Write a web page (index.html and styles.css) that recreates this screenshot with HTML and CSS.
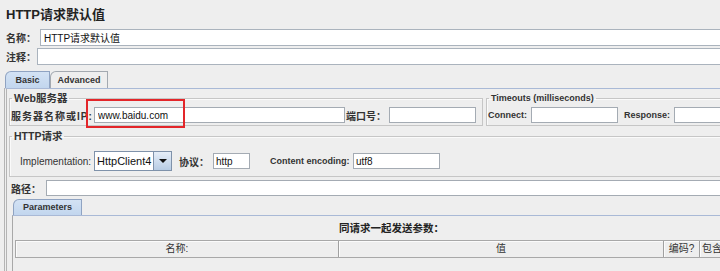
FILE: index.html
```html
<!DOCTYPE html>
<html>
  <head>
    <title>HTTP请求默认值</title>
    <link rel="stylesheet" href="styles.css">
  </head>
  <body>
    <div class="page">
      <h1 class="title">HTTP请求默认值</h1>
      <div class="row name-row">
        <label class="cn-label name-label">名称：</label>
        <input class="text top-input name-input" type="text" value="HTTP请求默认值">
      </div>
      <div class="row comment-row">
        <label class="cn-label comment-label">注释：</label>
        <input class="text top-input" type="text">
      </div>
      <div class="tabs">
        <span class="tab active basic-tab">Basic</span>
        <span class="tab advanced-tab">Advanced</span>
      </div>
      <div class="tab-panel">
        <div class="group-row">
          <fieldset class="group web-group">
            <legend class="cn-legend">Web服务器</legend>
            <div class="field-line">
              <label class="cn-label host-label">服务器名称或IP:</label>
              <input class="text host-input" type="text" value="www.baidu.com">
              <label class="cn-label port-label">端口号：</label>
              <input class="text small-input" type="text">
            </div>
          </fieldset>
          <fieldset class="group timeout-group">
            <legend class="en-legend">Timeouts (milliseconds)</legend>
            <div class="field-line">
              <label class="en-label connect-label">Connect:</label>
              <input class="text small-input" type="text">
              <label class="en-label response-label">Response:</label>
              <input class="text small-input" type="text">
            </div>
          </fieldset>
        </div>
        <fieldset class="group http-group">
          <legend class="cn-legend">HTTP请求</legend>
          <div class="impl-line">
            <label class="impl-label">Implementation:</label>
            <div class="combo">
              <span class="combo-value">HttpClient4</span>
              <span class="combo-button"><span class="arrow"></span></span>
            </div>
            <label class="cn-label protocol-label">协议：</label>
            <input class="text protocol-input" type="text" value="http">
            <label class="en-label encoding-label">Content encoding:</label>
            <input class="text small-input" type="text" value="utf8">
          </div>
        </fieldset>
        <div class="row path-row">
          <label class="cn-label path-label">路径：</label>
          <input class="text path-input" type="text">
        </div>
        <div class="sub-tabs">
          <span class="tab active params-tab">Parameters</span>
        </div>
        <div class="sub-panel">
          <div class="caption">同请求一起发送参数：</div>
          <div class="table-head">
            <span class="head-cell col-name">名称:</span>
            <span class="head-cell col-value">值</span>
            <span class="head-cell col-encode">编码?</span>
            <span class="head-cell col-include">包含</span>
          </div>
          <div class="table-body"></div>
        </div>
      </div>
      <div class="highlight"></div>
    </div>
  </body>
</html>
```

FILE: styles.css
```css
body {
  margin: 0;
  background: #eeeeee;
  overflow: hidden;
  font-family: "Liberation Sans", "Noto Sans CJK SC", sans-serif;
  color: #222;
}

.page {
  position: relative;
  width: 770px;
  height: 271px;
}

.title {
  margin: 0;
  height: 29px;
  box-sizing: border-box;
  padding: 6px 0 0 6px;
  font-size: 13px;
  line-height: 17px;
  font-weight: bold;
  color: #222;
}

.row {
  display: flex;
  align-items: center;
}

.cn-label {
  font-family: "Liberation Sans", "Noto Sans CJK SC", sans-serif;
  font-size: 10px;
  font-weight: bold;
  color: #333;
  white-space: nowrap;
}

.en-label {
  font-size: 9px;
  font-weight: bold;
  color: #333;
  white-space: nowrap;
}

.text {
  box-sizing: border-box;
  height: 16px;
  margin: 0;
  padding: 0 2px;
  border: 1px solid #a4abb3;
  background: #fff;
  font-family: "Liberation Sans", "Noto Sans CJK SC", sans-serif;
  font-size: 10px;
  color: #111;
  outline: none;
}

.name-row {
  padding-left: 6px;
  height: 17px;
}

.name-label {
  width: 34px;
}

.top-input {
  flex: 1;
  height: 17px;
  border-color: #aab3bd;
}

.name-input {
  padding-left: 3px;
}

.comment-row {
  margin-top: 2px;
  padding-left: 6px;
  height: 17px;
}

.comment-label {
  width: 31px;
}

.tabs {
  display: flex;
  align-items: flex-end;
  margin-top: 6px;
  padding-left: 5px;
  height: 17px;
}

.tab {
  box-sizing: border-box;
  height: 17px;
  border: 1px solid #a3a9b0;
  border-bottom: none;
  border-top-left-radius: 6px;
  background: #eeeeee;
  font-size: 9px;
  font-weight: bold;
  line-height: 16px;
  text-align: center;
  color: #333;
}

.tab.active {
  background: linear-gradient(#d3e2f4, #c2d6ee);
  border-color: #8fa3c2;
}

.basic-tab {
  width: 45px;
}

.advanced-tab {
  width: 58px;
}

.tab-panel {
  margin-left: 4px;
  border-top: 1px solid #a9b9d6;
  border-left: 3px double #b4b4b4;
  height: 183px;
}

.group-row {
  display: flex;
  margin-top: 2px;
  padding-left: 2px;
}

.group {
  margin: 0;
  padding: 0 2px 2px 1px;
  border: 1px solid #c6c6c6;
  box-shadow: inset 1px 1px #fafafa;
  min-width: 0;
}

.group legend {
  margin-left: 1px;
  padding: 0 2px;
  line-height: 14px;
  color: #333;
  white-space: nowrap;
}

.cn-legend {
  font-size: 10.5px;
  font-weight: bold;
}

.en-legend {
  font-size: 9px;
  font-weight: bold;
}

.web-group {
  box-sizing: border-box;
  width: 474px;
}

.timeout-group {
  flex: 1;
  margin-left: 3px;
}

.field-line {
  display: flex;
  align-items: center;
  margin-top: 2px;
  height: 16px;
}

.host-label {
  width: 83px;
  letter-spacing: 1px;
}

.host-input {
  width: 251px;
  padding-left: 3px;
}

.port-label {
  width: 44px;
  padding-left: 1px;
  box-sizing: border-box;
}

.small-input {
  width: 87px;
}

.connect-label {
  width: 43px;
}

.response-label {
  width: 50px;
  margin-left: 6px;
}

.http-group {
  margin: 3px 0 0 2px;
  padding-bottom: 5px;
}

.impl-line {
  display: flex;
  align-items: center;
  margin-top: 8px;
  padding-left: 9px;
  height: 20px;
}

.impl-label {
  width: 74px;
  font-size: 10px;
  color: #333;
}

.combo {
  display: flex;
  box-sizing: border-box;
  width: 78px;
  height: 20px;
  border: 1px solid #7f92aa;
  background: #fff;
}

.combo-value {
  flex: 1;
  padding-left: 2px;
  font-size: 11px;
  line-height: 18px;
  color: #111;
}

.combo-button {
  display: flex;
  align-items: center;
  justify-content: center;
  width: 17px;
  border-left: 1px solid #7f92aa;
  background: linear-gradient(#e6eef8, #b7cce4);
}

.arrow {
  width: 0;
  height: 0;
  border-left: 4px solid transparent;
  border-right: 4px solid transparent;
  border-top: 4px solid #111;
}

.protocol-label {
  width: 34px;
  margin-left: 7px;
}

.protocol-input {
  width: 37px;
}

.encoding-label {
  width: 83px;
  margin-left: 20px;
}

.path-row {
  margin-top: 3px;
  padding-left: 4px;
  height: 16px;
}

.path-label {
  width: 35px;
}

.path-input {
  flex: 1;
}

.sub-tabs {
  display: flex;
  margin-top: 3px;
  padding-left: 6px;
  height: 16px;
}

.params-tab {
  width: 69px;
  height: 16px;
  line-height: 15px;
}

.sub-panel {
  margin-left: 5px;
  border-top: 1px solid #a9b9d6;
  border-left: 1px solid #a8a8a8;
  height: 60px;
}

.caption {
  height: 24px;
  line-height: 24px;
  text-align: center;
  font-size: 10.5px;
  font-weight: bold;
  color: #222;
}

.table-head {
  display: flex;
  margin-left: 2px;
  height: 18px;
  box-sizing: border-box;
  border-top: 1px solid #a8a8a8;
  border-bottom: 1px solid #a8a8a8;
  border-left: 1px solid #a8a8a8;
}

.head-cell {
  box-sizing: border-box;
  border-right: 1px solid #a0a0a0;
  box-shadow: inset 1px 1px #fbfbfb;
  font-size: 10px;
  line-height: 16px;
  text-align: center;
  color: #333;
}

.col-name {
  width: 323px;
}

.col-value {
  width: 325px;
}

.col-encode {
  width: 36px;
}

.col-include {
  width: 24px;
  text-align: left;
  padding-left: 2px;
  overflow: visible;
}

.table-body {
  height: 13px;
}

.highlight {
  position: absolute;
  left: 86px;
  top: 99px;
  width: 99px;
  height: 29px;
  box-sizing: border-box;
  border: 2px solid #e3262a;
}
```
